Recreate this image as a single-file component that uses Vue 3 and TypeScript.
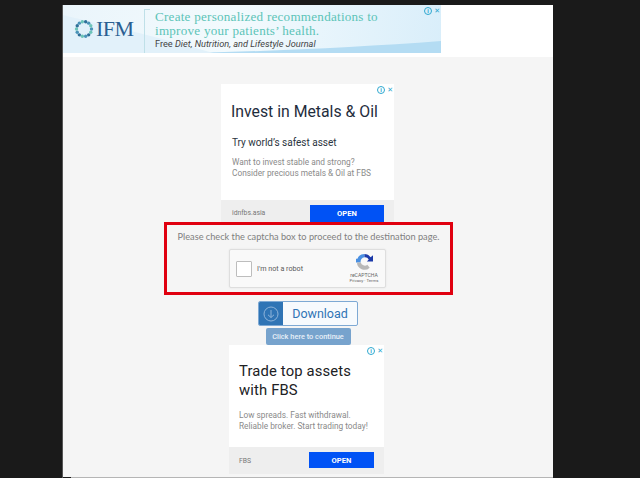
<script setup lang="ts">
const ringDots: { x: number; y: number; c: string }[] = Array.from({ length: 14 }, (_, i) => {
  const a = (i / 14) * Math.PI * 2
  return { x: 10 + Math.cos(a) * 7.5, y: 10 + Math.sin(a) * 7.5, c: i % 3 === 0 ? '#4a93b8' : i % 3 === 1 ? '#6cc4b8' : '#2f6f98' }
})
</script>

<template>
  <div class="screen">
    <div class="sheet">
      <div class="top">
        <div class="banner">
          <svg class="wave" viewBox="0 0 378 48" preserveAspectRatio="none">
            <path d="M130 48 C210 46 300 42 378 36 L378 48 Z" fill="#b4dcf3" />
            <path d="M0 10 C40 20 90 30 150 48 L0 48 Z" fill="#e2f1fa" />
          </svg>
          <div class="logo">
            <svg width="20" height="20" viewBox="0 0 20 20">
              <circle v-for="(d, i) in ringDots" :key="i" :cx="d.x" :cy="d.y" r="1.7" :fill="d.c" />
            </svg>
            <span class="ifm">IFM</span>
          </div>
          <div class="copy">
            <div class="headline">Create personalized recommendations to<br />improve your patients’ health.</div>
            <div class="journal">Free <i>Diet, Nutrition, and Lifestyle Journal</i></div>
          </div>
          <div class="adchoice big"><span class="i">i</span><span class="x">✕</span></div>
        </div>
      </div>
      <div class="panel">
        <div class="card first">
          <div class="adchoice"><span class="i">i</span><span class="x">✕</span></div>
          <div class="card-body">
            <div class="title one">Invest in Metals &amp; Oil</div>
            <div class="sub">Try world’s safest asset</div>
            <div class="desc">Want to invest stable and strong?<br />Consider precious metals &amp; Oil at FBS</div>
          </div>
          <div class="card-foot">
            <span class="site">idnfbs.asia</span>
            <span class="open">OPEN</span>
          </div>
        </div>

        <div class="redbox">
          <div class="notice">Please check the captcha box to proceed to the destination page.</div>
          <div class="captcha">
            <span class="check"></span>
            <span class="robot">I'm not a robot</span>
            <div class="brand">
              <svg width="17" height="17" viewBox="0 0 18 18">
                <path d="M9 1 A8 8 0 0 0 1.5 6 L0 6 L0 10 L5 10 A4.5 4.5 0 0 1 9 4.5 Z" fill="#4a90e2" />
                <path d="M9 1 A8 8 0 0 1 15.5 4.5 L18 2.5 L18 9 L11.5 9 L13.5 7 A4.5 4.5 0 0 0 9 4.5 Z" fill="#1c3aa9" />
                <path d="M1 10 L5 10 A4.5 4.5 0 0 0 12 12.5 L14.5 15.5 A8 8 0 0 1 1 10 Z" fill="#b8b8b8" />
              </svg>
              <span class="re">reCAPTCHA</span>
              <span class="terms">Privacy · Terms</span>
            </div>
          </div>
        </div>

        <div class="download">
          <span class="dl-icon">
            <svg width="16" height="16" viewBox="0 0 16 16" fill="none" stroke="#8fb4d9" stroke-width="1">
              <circle cx="8" cy="8" r="7" />
              <path d="M8 4 V11.5 M5 8.8 L8 11.5 L11 8.8" />
            </svg>
          </span>
          <span class="dl-text">Download</span>
        </div>
        <div class="continue">Click here to continue</div>

        <div class="card second">
          <div class="adchoice"><span class="i">i</span><span class="x">✕</span></div>
          <div class="card-body">
            <div class="title two">Trade top assets<br />with FBS</div>
            <div class="desc two">Low spreads. Fast withdrawal.<br />Reliable broker. Start trading today!</div>
          </div>
          <div class="card-foot">
            <span class="site">FBS</span>
            <span class="open">OPEN</span>
          </div>
        </div>
      </div>
      <div class="rule"></div>
    </div>
  </div>
</template>

<style>
html, body { margin: 0; background: #1a1a1a; }
</style>

<style scoped>
.screen {
  width: 640px;
  height: 478px;
  background: #1a1a1a;
  overflow: hidden;
  box-sizing: border-box;
  padding: 5px 0 0 62px;
  font-family: Roboto, "Liberation Sans", sans-serif;
}
.sheet { width: 491px; height: 473px; display: flex; flex-direction: column; border-left: 1px solid #555; box-sizing: border-box; }
.top { background: #fff; height: 52px; flex: none; }
.banner {
  position: relative;
  width: 378px;
  height: 48px;
  overflow: hidden;
  background: linear-gradient(100deg, #eaf5fb 0%, #f3fafd 45%, #d9eefa 100%);
  display: flex;
}
.wave { position: absolute; inset: 0; width: 100%; height: 100%; }
.logo { position: relative; display: flex; align-items: center; gap: 2px; width: 81px; padding-left: 11px; box-sizing: border-box; flex: none; }
.ifm { font-family: "Liberation Serif", serif; font-size: 22px; color: #2a5f92; letter-spacing: -0.5px; }
.copy { position: relative; border-left: 1px solid #bfe0e8; margin-top: 4px; padding-left: 10px; height: 44px; }
.copy::before { content: ""; position: absolute; top: 0; left: 0; width: 5px; height: 1px; background: #bfe0e8; }
.headline { font-family: "Liberation Serif", serif; font-size: 13.1px; line-height: 13.5px; color: #5cc4b8; letter-spacing: 0.25px; margin-top: 1px; white-space: nowrap; }
.journal { font-size: 9.2px; color: #444; margin-top: 1px; line-height: 11px; white-space: nowrap; }
.adchoice { position: absolute; top: 2px; right: 1px; display: flex; gap: 2px; align-items: center; color: #2fa8d0; }
.adchoice.big { top: 2px; right: 1px; }
.adchoice .i {
  width: 6px; height: 6px; border: 1px solid #2fa8d0; border-radius: 50%;
  font-size: 6px; line-height: 6px; text-align: center; font-weight: 700;
}
.adchoice .x { font-size: 7px; line-height: 8px; font-family: "DejaVu Sans", sans-serif; }
.panel {
  flex: 1;
  background: #f5f5f5;
  display: flex;
  flex-direction: column;
  align-items: center;
  padding-top: 27px;
  box-sizing: border-box;
  min-height: 0;
}
.card { position: relative; background: #fff; display: flex; flex-direction: column; flex: none; box-sizing: border-box; }
.card.first { width: 173px; height: 138px; margin-left: -1px; }
.card.second { width: 155px; height: 129px; margin-left: -3px; }
.card-body { flex: 1; padding: 0 11px; }
.card.second .card-body { padding: 0 10px; }
.title { color: #202124; }
.title.one { font-size: 15.8px; line-height: 20px; margin-top: 18px; margin-left: -1px; color: #1f2d3d; white-space: nowrap; }
.title.two { font-size: 14.8px; line-height: 19px; margin-top: 17px; letter-spacing: 0.15px; white-space: nowrap; }
.sub { font-size: 10px; line-height: 13px; margin-top: 14px; color: #2b3440; white-space: nowrap; }
.desc { font-size: 8.3px; line-height: 11px; color: #8a8a8a; margin-top: 8px; white-space: nowrap; }
.desc.two { margin-top: 10px; }
.card.first .card-foot { height: 22px; padding: 0 10px 0 11px; }
.card.second .card-foot { height: 27px; padding: 0 10px; }
.card-foot { background: #eeeeee; display: flex; align-items: center; justify-content: space-between; flex: none; }
.card.first .open { width: 74px; height: 17px; margin-top: 5px; }
.card.first .site { margin-top: 4px; }
.card.second .open { width: 65px; height: 16px; margin-bottom: 1px; }
.site { font-size: 6.8px; color: #777; }
.open { background: #0052f5; color: #fff; font-size: 7.6px; font-weight: 700; display: flex; align-items: center; justify-content: center; }
.redbox {
  width: 289px; height: 73px; border: 3px solid #e0000f; box-sizing: border-box;
  margin-left: 1px; display: flex; flex-direction: column; align-items: center; flex: none;
}
.notice { font-size: 9.2px; line-height: 12px; margin-top: 6px; color: #808080; font-family: Lato, "Open Sans", sans-serif; white-space: nowrap; }
.captcha {
  width: 157px; height: 39px; margin-top: 6px; margin-right: 2px; background: #f9f9f9; border: 1px solid #dedede; border-radius: 2px;
  box-sizing: border-box; display: flex; align-items: center; box-shadow: 0 0 2px rgba(0,0,0,.08); flex: none;
}
.check { width: 14px; height: 14px; background: #fff; border: 1px solid #bdbdbd; border-radius: 1px; margin-left: 6px; flex: none; }
.robot { font-size: 7.2px; color: #5a5a5a; margin-left: 5px; white-space: nowrap; }
.brand { margin-left: auto; width: 30px; margin-right: 6px; display: flex; flex-direction: column; align-items: center; }
.re { font-size: 5.1px; line-height: 6px; color: #666; margin-top: 2px; }
.terms { font-size: 4.3px; line-height: 6px; color: #666; white-space: nowrap; }
.download {
  width: 100px; height: 25px; margin-top: 6px; display: flex; box-sizing: border-box; flex: none;
  border: 1px solid #7ea9d4; border-radius: 2px; background: #f7fafd; overflow: hidden;
}
.dl-icon { width: 24px; background: #2f74b5; display: flex; align-items: center; justify-content: center; flex: none; }
.dl-text { flex: 1; text-align: center; font-size: 12.5px; line-height: 23px; color: #2f74b5; }
.continue {
  width: 85px; height: 17px; margin-top: 2px; background: #77a3cd; color: #e8f0f8; border-radius: 2px;
  font-size: 7.4px; font-weight: 500; line-height: 17px; text-align: center; flex: none; white-space: nowrap;
}
.rule { height: 1px; background: #b5b5b5; margin-left: 8px; flex: none; }
</style>
